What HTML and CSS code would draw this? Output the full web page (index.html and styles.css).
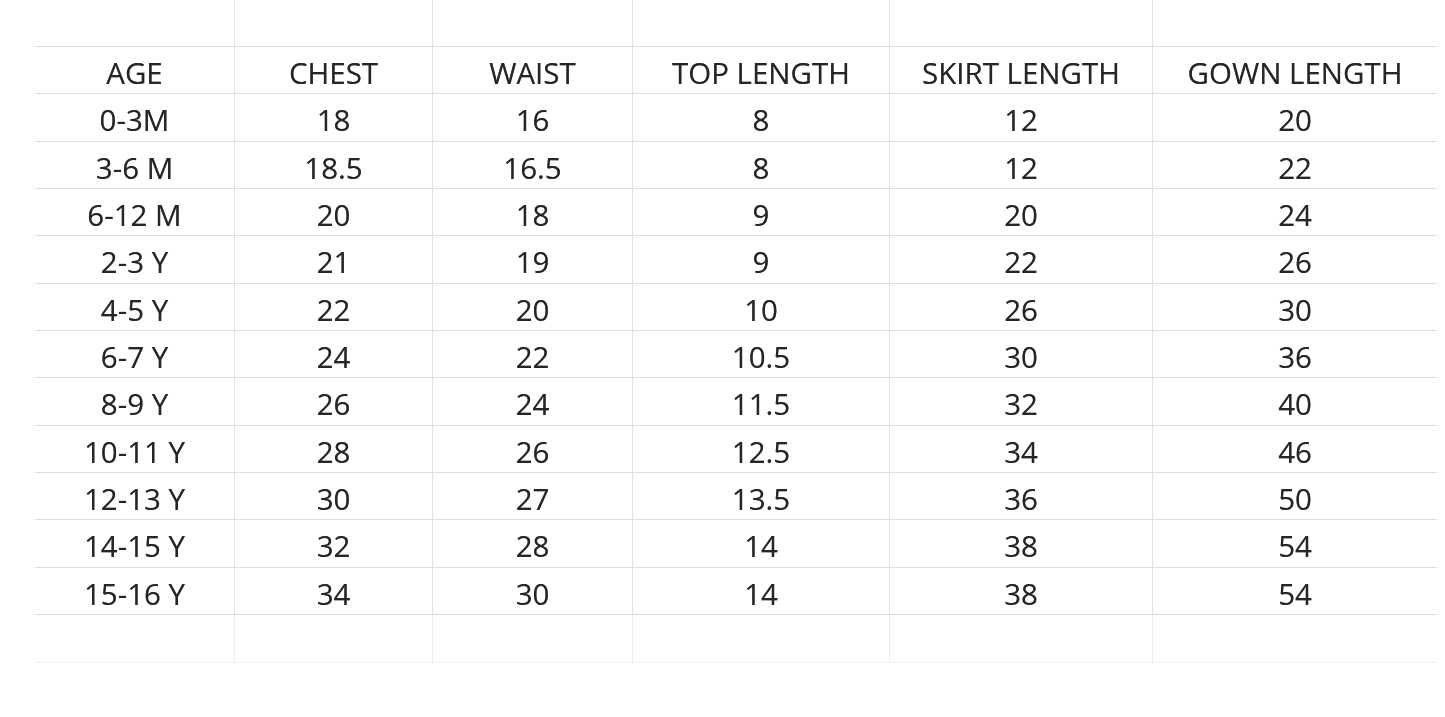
FILE: index.html
```html
<!DOCTYPE html>
<html>
<head>
<meta charset="utf-8">
<link rel="stylesheet" href="styles.css">
<title>Size Chart</title>
</head>
<body>
<div class="sheet">
  <div class="grid">
    <div class="c top"></div><div class="c top"></div><div class="c top"></div><div class="c top"></div><div class="c top"></div><div class="c top last"></div>

    <div class="c">AGE</div><div class="c">CHEST</div><div class="c">WAIST</div><div class="c">TOP LENGTH</div><div class="c">SKIRT LENGTH</div><div class="c last">GOWN LENGTH</div>

    <div class="c">0-3M</div><div class="c">18</div><div class="c">16</div><div class="c">8</div><div class="c">12</div><div class="c last">20</div>
    <div class="c">3-6 M</div><div class="c">18.5</div><div class="c">16.5</div><div class="c">8</div><div class="c">12</div><div class="c last">22</div>
    <div class="c">6-12 M</div><div class="c">20</div><div class="c">18</div><div class="c">9</div><div class="c">20</div><div class="c last">24</div>
    <div class="c">2-3 Y</div><div class="c">21</div><div class="c">19</div><div class="c">9</div><div class="c">22</div><div class="c last">26</div>
    <div class="c">4-5 Y</div><div class="c">22</div><div class="c">20</div><div class="c">10</div><div class="c">26</div><div class="c last">30</div>
    <div class="c">6-7 Y</div><div class="c">24</div><div class="c">22</div><div class="c">10.5</div><div class="c">30</div><div class="c last">36</div>
    <div class="c">8-9 Y</div><div class="c">26</div><div class="c">24</div><div class="c">11.5</div><div class="c">32</div><div class="c last">40</div>
    <div class="c">10-11 Y</div><div class="c">28</div><div class="c">26</div><div class="c">12.5</div><div class="c">34</div><div class="c last">46</div>
    <div class="c">12-13 Y</div><div class="c">30</div><div class="c">27</div><div class="c">13.5</div><div class="c">36</div><div class="c last">50</div>
    <div class="c">14-15 Y</div><div class="c">32</div><div class="c">28</div><div class="c">14</div><div class="c">38</div><div class="c last">54</div>
    <div class="c">15-16 Y</div><div class="c">34</div><div class="c">30</div><div class="c">14</div><div class="c">38</div><div class="c last">54</div>

    <div class="c end"></div><div class="c end"></div><div class="c end"></div><div class="c end"></div><div class="c end"></div><div class="c end last"></div>
  </div>
</div>
</body>
</html>
```

FILE: styles.css
```css
html, body {
  margin: 0;
  padding: 0;
  background: #ffffff;
}

.sheet {
  padding-left: 35px;
  width: 1445px;
  height: 717px;
  box-sizing: border-box;
  overflow: hidden;
}

.grid {
  display: grid;
  grid-template-columns: 200px 198px 200px 257px 263px 284px;
  grid-template-rows: 47px repeat(12, 47.33px) 48px;
  font-family: "Open Sans", "Liberation Sans", sans-serif;
  font-size: 29.5px;
  color: #262626;
}

.c {
  box-sizing: border-box;
  display: flex;
  align-items: center;
  justify-content: center;
  padding-top: 5px;
  border-right: 1px solid #e3e3e3;
  border-bottom: 1px solid #dedede;
  white-space: nowrap;
  text-shadow: 0 0 0.6px rgba(30, 30, 30, 0.6);
  filter: blur(0.35px);
}

.c.last {
  border-right: none;
}

.c.end {
  border-bottom-color: #efefef;
  border-right-color: #ececec;
}
```
